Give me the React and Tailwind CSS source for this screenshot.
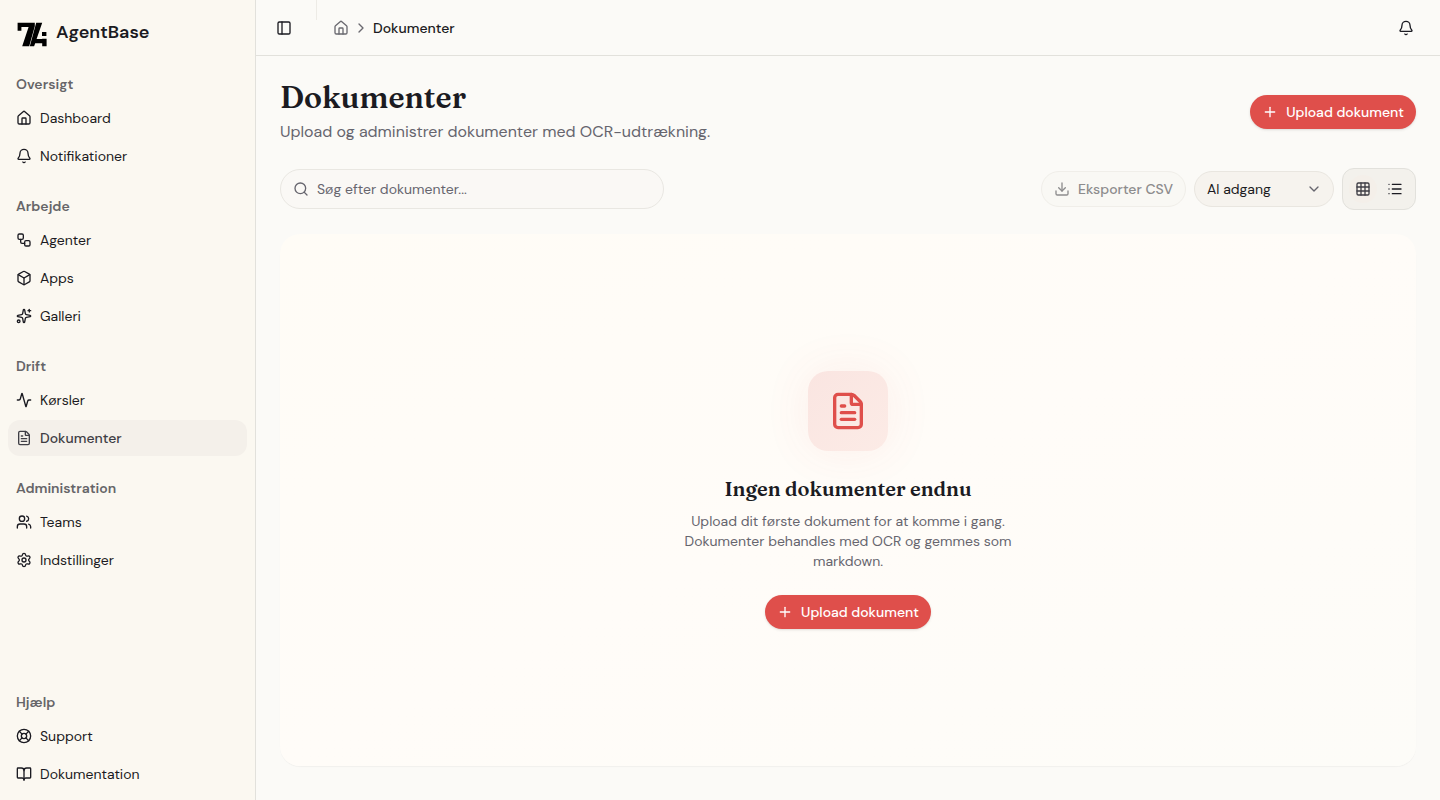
import {
  Activity, Bell, BookOpen, Box, ChevronDown, ChevronRight, Download, FileText, Grid3x3, House,
  LifeBuoy, List, PanelLeft, Plus, Search, Settings, Sparkles, Users, Workflow,
} from "lucide-react";

const mainGroups = [
  { title: "Oversigt", items: [["Dashboard", House], ["Notifikationer", Bell]] },
  { title: "Arbejde", items: [["Agenter", Workflow], ["Apps", Box], ["Galleri", Sparkles]] },
  { title: "Drift", items: [["Kørsler", Activity], ["Dokumenter", FileText]] },
  { title: "Administration", items: [["Teams", Users], ["Indstillinger", Settings]] },
];
const helpGroup = { title: "Hjælp", items: [["Support", LifeBuoy], ["Dokumentation", BookOpen]] };

function Logo() {
  return (
    <svg viewBox="0 0 32 32" className="size-8" aria-hidden="true">
      <path d="M1.6 4.8h17.2v3.4L13.2 28.3H6.2L12.6 9H5.4v3.8H1.6z" />
      <path d="M20.2 4.8h6L20.6 21h5.6v-.2h4.4v7.5h-4.4v-3H19.2l-1.1 3H13.8z" />
      <path d="M26 14h4.4v4H26z" />
    </svg>
  );
}

function NavGroup({ title, items }) {
  return (
    <section className="p-2">
      <h2 className="flex h-8 items-center px-2 text-sm font-semibold text-[#666568]">{title}</h2>
      <ul className="flex flex-col gap-0.5">
        {items.map(([label, Icon]) => {
          const active = label === "Dokumenter";
          return (
            <li key={label}>
              <a
                href="#"
                aria-current={active ? "page" : undefined}
                className={`flex h-9 items-center gap-2 rounded-xl px-2 text-sm ${active ? "bg-[#f4f0ea] font-medium text-[#3f3e45]" : "text-[#1b1b22]"}`}
              >
                <Icon className="size-4" />
                {label}
              </a>
            </li>
          );
        })}
      </ul>
    </section>
  );
}

function UploadButton() {
  return (
    <button className="flex h-[34px] items-center gap-2 rounded-full bg-[#df4f4b] px-3 text-sm font-medium text-white shadow-sm">
      <Plus className="size-4" />
      Upload dokument
    </button>
  );
}

export default function App() {
  return (
    <div className="flex min-h-screen bg-[#fbfaf7] font-['DM_Sans',Inter,sans-serif] text-[#1b1b22] antialiased">
      <aside className="flex w-64 shrink-0 flex-col border-r border-[#e2e1dc] bg-[#fbf8f1]">
        <div className="flex h-[60px] items-center gap-2 px-4 pt-2">
          <Logo />
          <span className="pb-1 text-lg font-semibold">AgentBase</span>
        </div>
        <nav className="flex flex-1 flex-col">
          {mainGroups.map((g) => <NavGroup key={g.title} {...g} />)}
          <div className="mt-auto"><NavGroup {...helpGroup} /></div>
        </nav>
      </aside>

      <div className="flex min-w-0 flex-1 flex-col">
        <header className="flex h-14 items-center border-b border-[#e2e1dc] px-4">
          <button aria-label="Skjul sidebjælke" className="grid size-6 place-items-center p-1">
            <PanelLeft className="size-4" />
          </button>
          <div className="ml-5 mr-4 h-5 w-px self-start bg-[#edebe6]" />
          <nav aria-label="Brødkrumme" className="flex flex-1 items-center gap-1 text-sm">
            <a href="#" aria-label="Hjem" className="text-[#6a6970]"><House className="size-4" /></a>
            <ChevronRight className="size-4 text-[#6a6970]" />
            <span className="font-medium">Dokumenter</span>
          </nav>
          <button aria-label="Notifikationer" className="grid size-9 place-items-center">
            <Bell className="size-4" />
          </button>
        </header>

        <main className="flex flex-1 flex-col gap-6 px-6 pt-6 pb-[34px]">
          <div className="flex items-center justify-between">
            <div className="flex flex-col gap-1">
              <h1 className="font-['Fraunces','Liberation_Serif',serif] text-3xl leading-9 font-semibold text-[#1b1b22]">Dokumenter</h1>
              <p className="text-base text-[#66656e]">Upload og administrer dokumenter med OCR-udtrækning.</p>
            </div>
            <UploadButton />
          </div>

          <div className="flex items-center justify-between gap-4">
            <label className="flex h-10 w-96 items-center gap-2 rounded-full border border-[#e9e7e2] bg-[#faf8f5] px-3 text-[#66656e]">
              <Search className="size-4 shrink-0" />
              <input
                type="search"
                aria-label="Søg efter dokumenter"
                placeholder="Søg efter dokumenter..."
                className="min-w-0 flex-1 bg-transparent text-sm outline-none placeholder:text-[#66656e]"
              />
            </label>
            <div className="flex items-center gap-2">
              <button disabled className="flex h-9 items-center gap-2 rounded-full border border-[#f0eee9] bg-[#f9f8f4] px-3 text-sm font-medium text-[#8d8c8d]">
                <Download className="size-4" />
                Eksporter CSV
              </button>
              <div className="grid w-[140px] items-center">
                <select aria-label="Adgang" className="col-start-1 row-start-1 h-9 appearance-none rounded-full border border-[#e9e6e0] bg-[#f6f3ee] px-3 text-sm">
                  <option>Al adgang</option>
                </select>
                <ChevronDown className="pointer-events-none col-start-1 row-start-1 mr-3 size-4 justify-self-end text-[#66656e]" />
              </div>
              <div className="flex items-center gap-1 rounded-xl border border-[#e2e1dc] bg-[#f3f1ec] p-1.5">
                <button aria-label="Gittervisning" className="grid size-7 place-items-center rounded-full bg-[#f4efe9] text-[#3f3e45]">
                  <Grid3x3 className="size-4" />
                </button>
                <button aria-label="Listevisning" className="grid size-7 place-items-center rounded-full">
                  <List className="size-4" />
                </button>
              </div>
            </div>
          </div>

          <section className="flex flex-1 flex-col items-center justify-center rounded-[20px] bg-linear-to-br from-[#fffcf6] via-[#fffcf8] to-[#fdfcf8] shadow-[0_1px_1px_rgba(0,0,0,0.04)]">
            <div className="grid size-20 place-items-center rounded-[20px] bg-linear-to-br from-[#fae5e1] to-[#fcebe6] shadow-[0_0_48px_rgba(223,79,75,0.08)]">
              <FileText className="size-10 text-[#df4f4b]" />
            </div>
            <h2 className="mt-6 font-['Fraunces','Liberation_Serif',serif] text-xl leading-7 font-semibold">Ingen dokumenter endnu</h2>
            <p className="mt-2 mb-6 max-w-[340px] text-center text-sm leading-5 text-[#66656e]">
              Upload dit første dokument for at komme i gang. Dokumenter behandles med OCR og gemmes som markdown.
            </p>
            <UploadButton />
          </section>
        </main>
      </div>
    </div>
  );
}
